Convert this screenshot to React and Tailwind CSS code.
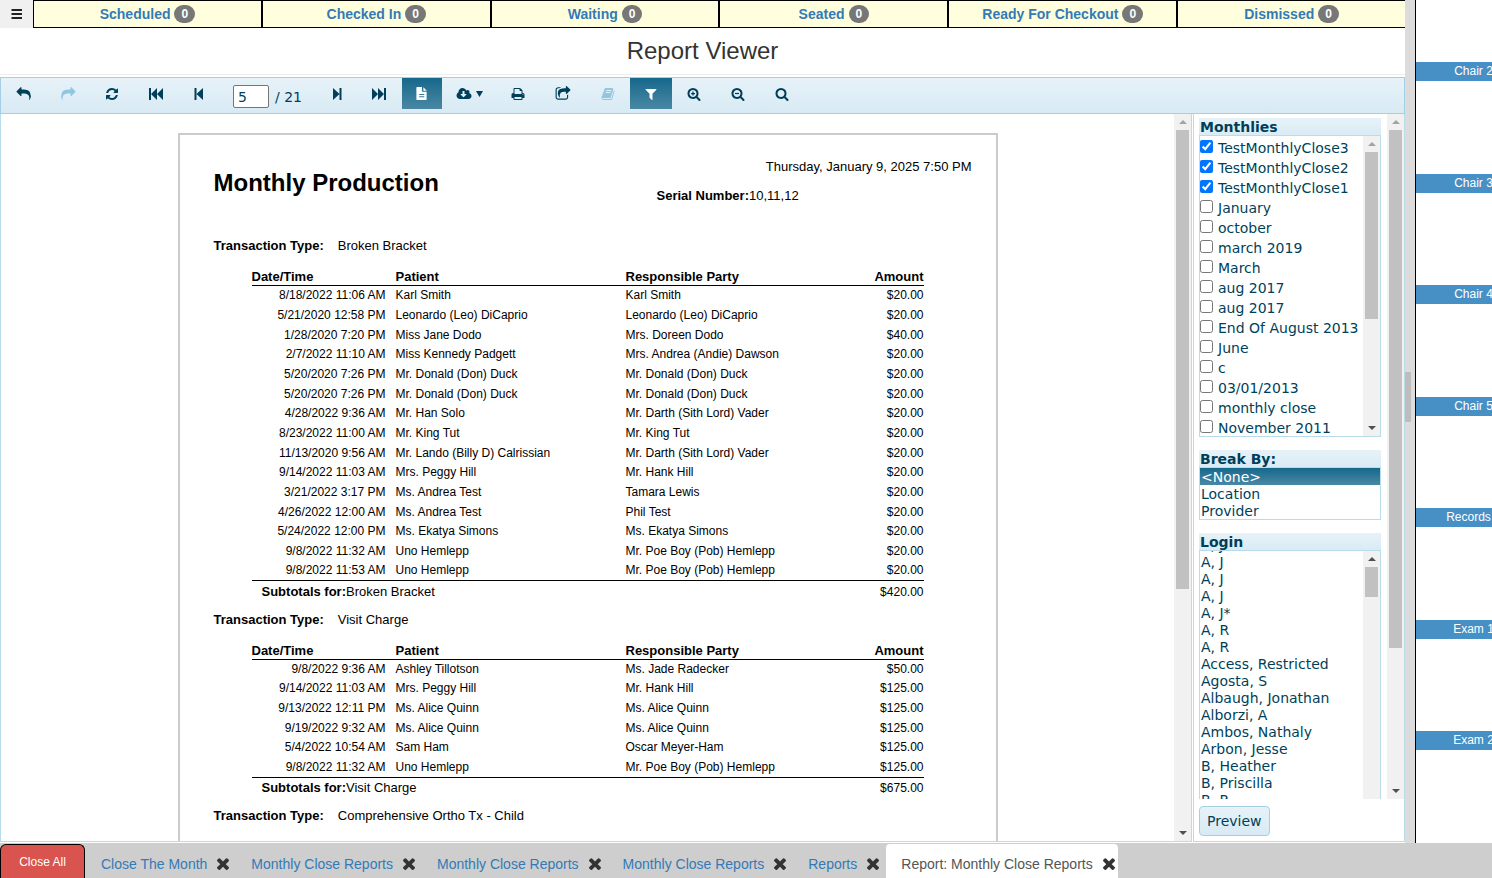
import React, { useState } from "react";

const statusTabs = ["Scheduled", "Checked In", "Waiting", "Seated", "Ready For Checkout", "Dismissed"];

const chairs = ["Chair 2", "Chair 3", "Chair 4", "Chair 5", "Records 1", "Exam 1", "Exam 2"];

const monthlies = [
    "TestMonthlyClose3", "TestMonthlyClose2", "TestMonthlyClose1", "January", "october",
    "march 2019", "March", "aug 2017", "aug 2017", "End Of August 2013", "June", "c",
    "03/01/2013", "monthly close", "November 2011"
];

const logins = [
    "A, J", "A, J", "A, J", "A, J", "A, J*", "A, R", "A, R", "Access, Restricted", "Agosta, S",
    "Albaugh, Jonathan", "Alborzi, A", "Ambos, Nathaly", "Arbon, Jesse", "B, Heather", "B, Priscilla", "B, R"
];

const openTabs = ["Close The Month", "Monthly Close Reports", "Monthly Close Reports", "Monthly Close Reports", "Reports", "Report: Monthly Close Reports"];

const sections = [
    {
        type: "Broken Bracket",
        total: "$420.00",
        rows: [
            ["8/18/2022 11:06 AM", "Karl Smith", "Karl Smith", "$20.00"],
            ["5/21/2020 12:58 PM", "Leonardo (Leo) DiCaprio", "Leonardo (Leo) DiCaprio", "$20.00"],
            ["1/28/2020 7:20 PM", "Miss Jane Dodo", "Mrs. Doreen Dodo", "$40.00"],
            ["2/7/2022 11:10 AM", "Miss Kennedy Padgett", "Mrs. Andrea (Andie) Dawson", "$20.00"],
            ["5/20/2020 7:26 PM", "Mr. Donald (Don) Duck", "Mr. Donald (Don) Duck", "$20.00"],
            ["5/20/2020 7:26 PM", "Mr. Donald (Don) Duck", "Mr. Donald (Don) Duck", "$20.00"],
            ["4/28/2022 9:36 AM", "Mr. Han Solo", "Mr. Darth (Sith Lord) Vader", "$20.00"],
            ["8/23/2022 11:00 AM", "Mr. King Tut", "Mr. King Tut", "$20.00"],
            ["11/13/2020 9:56 AM", "Mr. Lando (Billy D) Calrissian", "Mr. Darth (Sith Lord) Vader", "$20.00"],
            ["9/14/2022 11:03 AM", "Mrs. Peggy Hill", "Mr. Hank Hill", "$20.00"],
            ["3/21/2022 3:17 PM", "Ms. Andrea Test", "Tamara Lewis", "$20.00"],
            ["4/26/2022 12:00 AM", "Ms. Andrea Test", "Phil Test", "$20.00"],
            ["5/24/2022 12:00 PM", "Ms. Ekatya Simons", "Ms. Ekatya Simons", "$20.00"],
            ["9/8/2022 11:32 AM", "Uno Hemlepp", "Mr. Poe Boy (Pob) Hemlepp", "$20.00"],
            ["9/8/2022 11:53 AM", "Uno Hemlepp", "Mr. Poe Boy (Pob) Hemlepp", "$20.00"]
        ]
    },
    {
        type: "Visit Charge",
        total: "$675.00",
        rows: [
            ["9/8/2022 9:36 AM", "Ashley Tillotson", "Ms. Jade Radecker", "$50.00"],
            ["9/14/2022 11:03 AM", "Mrs. Peggy Hill", "Mr. Hank Hill", "$125.00"],
            ["9/13/2022 12:11 PM", "Ms. Alice Quinn", "Ms. Alice Quinn", "$125.00"],
            ["9/19/2022 9:32 AM", "Ms. Alice Quinn", "Ms. Alice Quinn", "$125.00"],
            ["5/4/2022 10:54 AM", "Sam Ham", "Oscar Meyer-Ham", "$125.00"],
            ["9/8/2022 11:32 AM", "Uno Hemlepp", "Mr. Poe Boy (Pob) Hemlepp", "$125.00"]
        ]
    },
    { type: "Comprehensive Ortho Tx - Child", rows: [] }
];

// 1792-unit glyphs
const glyphs = {
    reply: "M1792 1120q0 166-127 451-3 7-10.5 24t-13.5 30-13 22q-12 17-28 17-15 0-23.5-10t-8.5-25q0-9 2.5-26.5t2.5-23.5q5-68 5-123 0-112-19.5-200.5t-54-153.5-89-112-117.5-76.5-145.5-45.5-167.5-22-188-7h-224v256q0 26-19 45t-45 19-45-19l-512-512q-19-19-19-45t19-45l512-512q19-19 45-19t45 19 19 45v256h224q713 0 875 403 53 134 53 333z",
    refresh: "M1639 1056q0 5-1 7-64 268-268 434.5t-478 166.5q-146 0-282.5-55t-243.5-157l-129 129q-19 19-45 19t-45-19-19-45v-448q0-26 19-45t45-19h448q26 0 45 19t19 45-19 45l-137 137q71 66 161 102t187 36q134 0 250-65t186-179q11-17 53-117 8-23 30-23h192q13 0 22.5 9.5t9.5 22.5zm25-800v448q0 26-19 45t-45 19h-448q-26 0-45-19t-19-45 19-45l138-138q-148-137-349-137-134 0-250 65t-186 179q-11 17-53 117-8 23-30 23h-199q-13 0-22.5-9.5t-9.5-22.5v-7q65-268 270-434.5t480-166.5q146 0 284 55.5t245 156.5l130-129q19-19 45-19t45 19 19 45z",
    first: "M0 128h256v1536h-256zM1024 128v1536l-768-768zM1792 128v1536l-768-768z",
    prev: "M320 128h256v1536h-256zM1408 128v1536l-832-768z",
    next: "M1472 128h-256v1536h256zM384 128v1536l832-768z",
    last: "M1792 128h-256v1536h256zM768 128v1536l768-768zM0 128v1536l768-768z",
    file: "M1596 476q14 14 28 36h-472v-472q22 14 36 28zm-540 164h544v1056q0 40-28 68t-68 28h-1216q-40 0-68-28t-28-68v-1600q0-40 28-68t68-28h672v544q0 40 28 68t68 28zm224 736v-64q0-14-9-23t-23-9h-640q-14 0-23 9t-9 23v64q0 14 9 23t23 9h640q14 0 23-9t9-23zm0-320v-64q0-14-9-23t-23-9h-640q-14 0-23 9t-9 23v64q0 14 9 23t23 9h640q14 0 23-9t9-23z",
    cloud: "M1216 928q0-14-9-23t-23-9h-224v-352q0-13-9.5-22.5t-22.5-9.5h-192q-13 0-22.5 9.5t-9.5 22.5v352h-224q-13 0-22.5 9.5t-9.5 22.5q0 14 9 23l352 352q9 9 23 9t23-9l351-351q10-12 10-24zm640 224q0 159-112.5 271.5t-271.5 112.5h-1088q-185 0-316.5-131.5t-131.5-316.5q0-130 70-240t188-165q-2-30-2-43 0-212 150-362t362-150q156 0 285.5 87t188.5 231q71-62 166-62 106 0 181 75t75 181q0 76-41 138 130 31 213.5 135.5t83.5 238.5z",
    print: "M448 1536h896v-256h-896v256zm0-640h896v-384h-160q-40 0-68-28t-28-68v-160h-640v640zm1152 64q0-26-19-45t-45-19-45 19-19 45 19 45 45 19 45-19 19-45zm128 0v416q0 13-9.5 22.5t-22.5 9.5h-224v160q0 40-28 68t-68 28h-960q-40 0-68-28t-28-68v-160h-224q-13 0-22.5-9.5t-9.5-22.5v-416q0-79 56.5-135.5t135.5-56.5h64v-544q0-40 28-68t68-28h672q40 0 88 20t76 48l152 152q28 28 48 76t20 88v256h64q79 0 135.5 56.5t56.5 135.5z",
    send: "M1472 989v259q0 119-84.5 203.5t-203.5 84.5h-832q-119 0-203.5-84.5t-84.5-203.5v-832q0-119 84.5-203.5t203.5-84.5h255q13 0 22.5 9.5t9.5 22.5q0 27-26 32-77 26-133 60-10 4-16 4h-112q-66 0-113 47t-47 113v832q0 66 47 113t113 47h832q66 0 113-47t47-113v-214q0-19 18-29 28-13 54-37 16-16 35-8 21 9 21 29zm237-496l-384 384q-18 19-45 19-12 0-25-5-39-17-39-59v-192h-160q-323 0-438 131-119 137-74 473 3 23-20 34-8 2-12 2-16 0-26-13-10-14-21-31t-39.5-68.5-49.5-99.5-38.5-114-17.5-122q0-49 3.5-91t14-90 28-88 47-81.5 68.5-74 94.5-61.5 124.5-48.5 159.5-30.5 196.5-11h160v-192q0-42 39-59 13-5 25-5 26 0 45 19l384 384q19 19 19 45t-19 45z",
    book: "M1703 478q40 57 18 129l-275 906q-19 64-76.5 107.5t-122.5 43.5h-923q-77 0-148.5-53.5t-99.5-131.5q-24-67-2-127 0-4 3-27t4-37q1-8-3-21.5t-3-19.5q2-11 8-21t16.5-23.5 16.5-23.5q23-38 45-91.5t30-91.5q3-10 .5-30t-.5-28q3-11 17-28t17-23q21-36 42-92t25-90q1-9-2.5-32t.5-28q4-13 22-30.5t22-22.5q19-26 42.5-84.5t27.5-96.5q1-8-3-25.5t-2-26.5q2-8 9-18t18-23 17-21q8-12 16.5-30.5t15-35 16-36 19.5-32 26.5-23.5 36-11.5 47.5 5.5l-1 3q38-9 51-9h761q74 0 114 56t18 130l-274 906q-36 119-71.5 153.5t-128.5 34.5h-869q-27 0-38 15-11 16-1 43 24 70 144 70h923q29 0 56-15.5t35-41.5l300-987q7-22 5-57 38 15 59 43zm-1064 2q-4 13 2 22.5t20 9.5h608q13 0 25.5-9.5t16.5-22.5l21-64q4-13-2-22.5t-20-9.5h-608q-13 0-25.5 9.5t-16.5 22.5zm-83 256q-4 13 2 22.5t20 9.5h608q13 0 25.5-9.5t16.5-22.5l21-64q4-13-2-22.5t-20-9.5h-608q-13 0-25.5 9.5t-16.5 22.5z",
    filter: "M1595 295q17 41-14 70l-493 493v742q0 42-39 59-13 5-25 5-27 0-45-19l-256-256q-19-19-19-45v-486l-493-493q-31-29-14-70 17-39 59-39h1280q42 0 59 39z",
    search: "M1216 832q0-185-131.5-316.5t-316.5-131.5-316.5 131.5-131.5 316.5 131.5 316.5 316.5 131.5 316.5-131.5 131.5-316.5zm512 832q0 52-38 90t-90 38q-54 0-90-38l-343-342q-179 124-399 124-143 0-273.5-55.5t-225-150-150-225-55.5-273.5 55.5-273.5 150-225 225-150 273.5-55.5 273.5 55.5 225 150 150 225 55.5 273.5q0 220-124 399l343 343q37 37 37 90z",
    minus: "M512 752h512v160h-512z",
    plus: "M512 752h176v-176h160v176h176v160h-176v176h-160v-176h-176z",
    times: "M1490 1322q0 40-28 68l-136 136q-28 28-68 28t-68-28l-294-294-294 294q-28 28-68 28t-68-28l-136-136q-28-28-28-68t28-68l294-294-294-294q-28-28-28-68t28-68l136-136q28-28 68-28t68 28l294 294 294-294q28-28 68-28t68 28l136 136q28 28 28 68t-28 68l-294 294 294 294q28 28 28 68z",
    bars: "M192 256h1344v256h-1344zM192 768h1344v256h-1344zM192 1280h1344v256h-1344z"
};

const Glyph = ({ name, extra, className = "size-3.5" }) => (
    <svg viewBox="0 0 1792 1792" className={`${className} shrink-0 overflow-visible`} fill="currentColor" aria-hidden="true">
        <path d={glyphs[name]} />
        {extra && <path d={glyphs[extra]} />}
    </svg>
);

const ToolButton = ({ label, active, disabled, className = "w-11", children }) => (
    <button
        type="button"
        aria-label={label}
        disabled={disabled}
        className={`flex h-[31px] shrink-0 items-center justify-center gap-1 ${className} ${
            active ? "bg-linear-to-b from-[#13688c] to-[#4888a4] text-white" : ""
        } ${disabled ? "text-[#8fc6e0]" : ""}`}
    >
        {children}
    </button>
);

const Arrow = ({ down, dim }) => (
    <div className={`flex h-4 shrink-0 items-center justify-center ${dim ? "text-[#a3a3a3]" : "text-[#505050]"}`}>
        <svg viewBox="0 0 8 4" className="h-1 w-2" fill="currentColor" aria-hidden="true">
            <path d={down ? "M0 0h8L4 4z" : "M0 4h8L4 0z"} />
        </svg>
    </div>
);

const ScrollBar = ({ thumb, atTop = true }) => (
    <div className="flex w-[17px] shrink-0 flex-col bg-[#f1f1f1]">
        <Arrow dim={atTop} />
        <div className="mx-0.5 bg-[#c1c1c1]" style={{ height: thumb }} />
        <div className="flex-1" />
        <Arrow down />
    </div>
);

const Panel = ({ title, children }) => (
    <section>
        <h4 className="h-[17px] bg-linear-to-b from-[#e7f2f8] to-[#d9ebf4] pl-px text-sm leading-[19px] font-bold">{title}</h4>
        <div className="flex border border-[#b8dcea]">{children}</div>
    </section>
);

const ReportSection = ({ section }) => (
    <section className="mb-[7px]">
        <h3 className="flex h-5 items-center gap-3.5 text-[13px]">
            <span className="font-bold">Transaction Type:</span>
            <span>{section.type}</span>
        </h3>
        {section.rows.length > 0 && (
            <table className="mt-[13px] ml-[38px] w-[672px] table-fixed text-xs leading-4">
                <thead>
                    <tr className="h-4 border-b border-black text-left text-[13px]">
                        <th className="w-36">Date/Time</th>
                        <th className="w-[230px]">Patient</th>
                        <th className="w-[230px]">Responsible Party</th>
                        <th className="text-right">Amount</th>
                    </tr>
                </thead>
                <tbody>
                    {section.rows.map(([date, patient, party, amount], i) => (
                        <tr key={i} className="h-5 nth-[3n+1]:h-[19px]">
                            <td className="pr-2.5 text-right">{date}</td>
                            <td>{patient}</td>
                            <td>{party}</td>
                            <td className="text-right">{amount}</td>
                        </tr>
                    ))}
                </tbody>
                <tfoot>
                    <tr className="h-[22px] border-t border-black">
                        <td colSpan={3} className="pl-2.5 text-[13px]"><b>Subtotals for:</b>{section.type}</td>
                        <td className="text-right">{section.total}</td>
                    </tr>
                </tfoot>
            </table>
        )}
    </section>
);

const Toolbar = () => {
    const [page, setPage] = useState("5");

    return (
        <div className="flex h-[37px] shrink-0 border border-[#a3d0e4] bg-linear-to-b from-[#e7f2f8] to-[#d8eaf4] pl-px text-sm">
            <ToolButton label="Back"><Glyph name="reply" /></ToolButton>
            <ToolButton label="Forward" disabled><Glyph name="reply" className="size-3.5 -scale-x-100" /></ToolButton>
            <ToolButton label="Refresh"><Glyph name="refresh" /></ToolButton>
            <ToolButton label="First page"><Glyph name="first" /></ToolButton>
            <ToolButton label="Previous page" className="w-[42px]"><Glyph name="prev" /></ToolButton>
            <label className="mr-3.5 ml-[13px] flex items-center gap-1.5 pt-0.5">
                <input
                    aria-label="Page"
                    value={page}
                    onChange={(e) => setPage(e.target.value)}
                    className="h-[23px] w-9 rounded-xs border border-[#767676] bg-white px-1"
                />
                / 21
            </label>
            <ToolButton label="Next page" className="w-[42px]"><Glyph name="next" /></ToolButton>
            <ToolButton label="Last page" className="w-[42px]"><Glyph name="last" /></ToolButton>
            <div className="mx-0.5 flex">
                <ToolButton label="Print preview" active className="w-10"><Glyph name="file" className="size-[13px]" /></ToolButton>
            </div>
            <ToolButton label="Export" className="w-[52px]">
                <Glyph name="cloud" />
                <svg viewBox="0 0 7 6" className="ml-px h-1.5 w-[7px]" fill="currentColor" aria-hidden="true"><path d="M0 0h7L3.5 6z" /></svg>
            </ToolButton>
            <ToolButton label="Print"><Glyph name="print" /></ToolButton>
            <ToolButton label="Send" className="w-[46px]"><Glyph name="send" className="size-4" /></ToolButton>
            <ToolButton label="Document map" disabled><Glyph name="book" /></ToolButton>
            <ToolButton label="Parameters" active className="w-[42px]"><Glyph name="filter" /></ToolButton>
            <ToolButton label="Zoom in"><Glyph name="search" extra="plus" /></ToolButton>
            <ToolButton label="Zoom out"><Glyph name="search" extra="minus" /></ToolButton>
            <ToolButton label="Search"><Glyph name="search" /></ToolButton>
        </div>
    );
};

const Parameters = () => {
    const [checked, setChecked] = useState([0, 1, 2]);

    const toggle = (i) => {
        setChecked(prev => prev.includes(i) ? prev.filter(n => n !== i) : [...prev, i]);
    };

    return (
        <aside className="flex w-[212px] shrink-0 flex-col border-x border-b border-[#b8dcea] text-sm">
            <div className="flex min-h-0 flex-1 overflow-hidden">
                <div className="flex flex-1 flex-col gap-[13px] pt-1 pr-1.5 pl-[5px]">
                    <Panel title="Monthlies">
                        <div className="h-[300px] flex-1 overflow-hidden pt-px whitespace-nowrap">
                            {monthlies.map((name, i) => (
                                <label key={i} className="flex h-5 items-start gap-[5px] leading-[22px]">
                                    <input type="checkbox" checked={checked.includes(i)} onChange={() => toggle(i)} className="mt-[3px] size-[13px] shrink-0" />
                                    {name}
                                </label>
                            ))}
                        </div>
                        <ScrollBar thumb={167} />
                    </Panel>
                    <Panel title="Break By:">
                        <ul role="listbox" aria-label="Break By" className="flex-1 leading-[19px]">
                            <li role="option" aria-selected="true" className="h-[17px] bg-linear-to-b from-[#13688c] to-[#4888a4] px-px text-white">&lt;None&gt;</li>
                            <li role="option" aria-selected="false" className="h-[17px] px-px">Location</li>
                            <li role="option" aria-selected="false" className="h-[17px] px-px">Provider</li>
                        </ul>
                    </Panel>
                    <Panel title="Login">
                        <div className="flex h-[300px] flex-1 flex-col overflow-hidden">
                            <ul role="listbox" aria-label="Login" className="-mt-3.5 leading-[17px]">
                                {logins.map((name, i) => (
                                    <li key={i} role="option" aria-selected="false" className="px-px">{name}</li>
                                ))}
                            </ul>
                        </div>
                        <ScrollBar thumb={30} atTop={false} />
                    </Panel>
                </div>
                <ScrollBar thumb={518} />
            </div>
            <div className="shrink-0 pt-[7px] pb-[5px] pl-[5px]">
                <button type="button" className="h-[30px] rounded border border-[#a3d0e4] bg-linear-to-b from-[#e7f2f8] to-[#d8eaf4] px-[7px]">Preview</button>
            </div>
        </aside>
    );
};

const App = () => {
    return (
        <div className="flex h-screen flex-col overflow-hidden bg-white font-['Liberation_Sans',Arial,sans-serif] text-[#333]">
            <div className="flex min-h-0 flex-1">
                <main className="flex min-w-0 flex-1 flex-col pb-px">
                    <nav className="flex h-7 shrink-0">
                        <button type="button" aria-label="Menu" className="flex w-[33px] items-center justify-center bg-[#f0f0f0] text-[#222]">
                            <Glyph name="bars" />
                        </button>
                        <div className="flex flex-1 divide-x-2 divide-black border-y border-l border-black bg-[#ffffdd] text-sm font-bold">
                            {statusTabs.map((name) => (
                                <a key={name} href="#" className="flex flex-1 basis-0 items-center justify-center gap-1 border-black text-[#337ab7]">
                                    {name}
                                    <span className="rounded-full bg-[#777] px-[7px] text-xs leading-[18px] text-white">0</span>
                                </a>
                            ))}
                        </div>
                    </nav>
                    <h1 className="mb-0.5 h-[47px] shrink-0 border-b border-[#eee] text-center text-2xl leading-[46px]">Report Viewer</h1>
                    <div className="flex min-h-0 flex-1 flex-col font-['DejaVu_Sans',Verdana,sans-serif] text-[#003f59]">
                        <Toolbar />
                        <div className="flex min-h-0 flex-1">
                            <div className="mr-px flex min-w-0 flex-1 border-x border-b border-[#b8dcea]">
                                <div className="min-w-0 flex-1 overflow-hidden pt-[19px]">
                                    <article className="mx-auto min-h-full w-[820px] border-2 border-b-0 border-[#ccc] pr-6 pl-[34px] font-['Liberation_Sans',Arial,sans-serif] text-[13px] text-black">
                                        <header className="flex h-[101px] justify-between">
                                            <h2 className="mt-8 text-2xl leading-8 font-bold">Monthly Production</h2>
                                            <div className="w-[315px] pt-[22px] leading-5">
                                                <p className="text-right">Thursday, January 9, 2025 7:50 PM</p>
                                                <p className="mt-[9px]"><b>Serial Number:</b>10,11,12</p>
                                            </div>
                                        </header>
                                        {sections.map((section) => (
                                            <ReportSection key={section.type} section={section} />
                                        ))}
                                    </article>
                                </div>
                                <ScrollBar thumb={459} />
                            </div>
                            <Parameters />
                        </div>
                    </div>
                </main>
                <div className="flex w-2.5 shrink-0 items-center bg-[#dcdcdc]">
                    <div className="-mt-[50px] h-[50px] w-1.5 bg-[#bdbdbd]" />
                </div>
                <aside className="flex w-[77px] shrink-0 flex-col overflow-hidden border-l border-black pt-[62px]">
                    {chairs.map((name) => (
                        <div key={name} className="flex-1">
                            <div className="w-[115px] bg-[#4690c6] text-center text-xs leading-[19px] text-white">{name}</div>
                        </div>
                    ))}
                </aside>
            </div>
            <footer className="flex h-[35px] shrink-0 bg-[#cecece] pt-px text-sm">
                <button type="button" className="w-[85px] rounded-t-md border border-b-0 border-black bg-[#d9534f] text-xs text-white">Close All</button>
                <div className="flex gap-1 pl-px">
                    {openTabs.map((name, i) => {
                        const active = i === openTabs.length - 1;
                        return (
                            <div key={i} className={`flex items-center gap-2.5 rounded-t pt-1.5 pr-[3px] pb-px pl-[15px] ${active ? "bg-white" : ""}`}>
                                <a href="#" className={active ? "text-[#555]" : "text-[#337ab7]"}>{name}</a>
                                <button type="button" aria-label="Close tab">
                                    <svg viewBox="300 240 1192 1312" className="h-[13px] w-3" preserveAspectRatio="none" fill="currentColor" aria-hidden="true">
                                        <path d={glyphs.times} />
                                    </svg>
                                </button>
                            </div>
                        );
                    })}
                </div>
            </footer>
        </div>
    );
};

export default App;
